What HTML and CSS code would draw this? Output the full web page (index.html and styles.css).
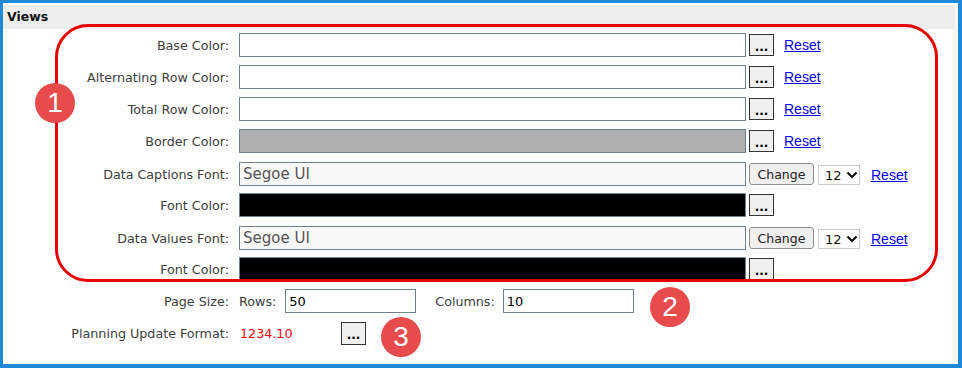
FILE: index.html
```
<html>

<head>
  <link rel="stylesheet" href="styles.css">
</head>

<body>
  <div class="frame">
    <div class="section-head">Views</div>
    <div class="form">
      <div class="row">
        <label class="lbl">Base Color:</label>
        <input class="field" type="text" />
        <button class="dots">...</button>
        <a href="#" class="reset">Reset</a>
      </div>
      <div class="row">
        <label class="lbl">Alternating Row Color:</label>
        <input class="field" type="text" />
        <button class="dots">...</button>
        <a href="#" class="reset">Reset</a>
      </div>
      <div class="row">
        <label class="lbl">Total Row Color:</label>
        <input class="field" type="text" />
        <button class="dots">...</button>
        <a href="#" class="reset">Reset</a>
      </div>
      <div class="row">
        <label class="lbl">Border Color:</label>
        <input class="field field-gray" type="text" />
        <button class="dots">...</button>
        <a href="#" class="reset">Reset</a>
      </div>
      <div class="row row-font">
        <label class="lbl">Data Captions Font:</label>
        <input class="field field-font" type="text" value="Segoe UI" readonly />
        <button class="change">Change</button>
        <div class="size-select">12
          <svg width="12" height="8" viewBox="0 0 12 8"><path d="M1.5 1.5 L6 6 L10.5 1.5" fill="none" stroke="#111" stroke-width="2.2"/></svg>
        </div>
        <a href="#" class="reset reset-wide">Reset</a>
      </div>
      <div class="row">
        <label class="lbl">Font Color:</label>
        <input class="field field-black" type="text" />
        <button class="dots">...</button>
      </div>
      <div class="row row-font">
        <label class="lbl">Data Values Font:</label>
        <input class="field field-font" type="text" value="Segoe UI" readonly />
        <button class="change">Change</button>
        <div class="size-select">12
          <svg width="12" height="8" viewBox="0 0 12 8"><path d="M1.5 1.5 L6 6 L10.5 1.5" fill="none" stroke="#111" stroke-width="2.2"/></svg>
        </div>
        <a href="#" class="reset reset-wide">Reset</a>
      </div>
      <div class="row">
        <label class="lbl">Font Color:</label>
        <input class="field field-black" type="text" />
        <button class="dots">...</button>
      </div>
      <div class="row">
        <label class="lbl">Page Size:</label>
        <span class="sub-lbl">Rows:</span>
        <input class="small-field" type="text" value="50" />
        <span class="sub-lbl cols-lbl">Columns:</span>
        <input class="small-field" type="text" value="10" />
      </div>
      <div class="row">
        <label class="lbl">Planning Update Format:</label>
        <span class="format-value">1234.10</span>
        <button class="dots dots-tall">...</button>
      </div>
    </div>

    <!-- callouts -->
    <div class="callout-box"></div>
    <div class="badge badge-1">1</div>
    <div class="badge badge-2">2</div>
    <div class="badge badge-3">3</div>
  </div>
</body>

</html>
```

FILE: styles.css
```
body {
  margin: 0;
  font-family: "DejaVu Sans", Verdana, sans-serif;
}

.frame {
  position: relative;
  width: 962px;
  height: 368px;
  box-sizing: border-box;
  border-style: solid;
  border-color: #1e88d9;
  border-width: 3px 4px 4px 3px;
  background: #ffffff;
}

.section-head {
  margin: 2px 3px 0 0;
  height: 24px;
  line-height: 24px;
  padding-left: 4px;
  background-color: #eeeeee;
  font-weight: bold;
  font-size: 12.5px;
  color: #111;
}

.form {
  padding-top: 4px;
}

.row {
  display: flex;
  align-items: center;
  height: 24px;
  margin-bottom: 8px;
}

.row-font .lbl,
.row-font .field {
  position: relative;
  top: 1px;
}

.lbl {
  width: 226px;
  margin-right: 10px;
  text-align: right;
  font-size: 12.7px;
  color: #3d3d3d;
  flex-shrink: 0;
}

.field {
  width: 507px;
  height: 24px;
  box-sizing: border-box;
  border: 1px solid #708090;
  padding: 0 3px;
  margin: 0;
  outline: none;
  background: #ffffff;
  font-family: "DejaVu Sans", Verdana, sans-serif;
}

.field-gray {
  background-color: #aeaeae;
}

.field-black {
  background-color: #000000;
}

.field-font {
  background-color: #f8f8f8;
  color: #555555;
  font-size: 15px;
}

.dots {
  width: 25px;
  height: 22px;
  margin: 0 0 0 3px;
  padding: 0;
  border: 1px solid #333;
  border-radius: 0;
  background-color: #efefef;
  font-family: "DejaVu Sans", Verdana, sans-serif;
  font-size: 12px;
  font-weight: bold;
  color: #000;
  line-height: 24px;
}

.dots-tall {
  height: 23px;
}

.reset {
  margin-left: 10px;
  font-family: "Liberation Sans", Arial, sans-serif;
  font-size: 14px;
  color: #0000ee;
}

.reset-wide {
  margin-left: 11px;
  position: relative;
  top: 2px;
}

.change {
  width: 65px;
  height: 22px;
  margin: 2px 0 0 3px;
  padding: 0;
  border: 1px solid #8f8f8f;
  border-radius: 3px;
  background-color: #efefef;
  font-family: "DejaVu Sans", Verdana, sans-serif;
  font-size: 12.5px;
  color: #222;
}

.size-select {
  width: 42px;
  height: 20px;
  box-sizing: border-box;
  margin: 4px 0 0 4px;
  padding-left: 6px;
  border: 1px solid #cccccc;
  background: #ffffff;
  display: flex;
  align-items: center;
  gap: 4px;
  font-size: 13px;
  color: #111;
}

.sub-lbl {
  font-size: 12.7px;
  color: #3d3d3d;
  margin-right: 9px;
}

.cols-lbl {
  margin-left: 19px;
  margin-right: 8px;
}

.small-field {
  width: 131px;
  height: 24px;
  box-sizing: border-box;
  border: 1px solid #708090;
  padding: 0 3px;
  margin: 0;
  font-family: "DejaVu Sans", Verdana, sans-serif;
  font-size: 13px;
  color: #000;
}

.format-value {
  width: 101px;
  margin-left: 1px;
  font-size: 12.7px;
  color: #ff0000;
}

.format-value + .dots {
  margin-left: 0;
}

.callout-box {
  position: absolute;
  left: 52px;
  top: 21px;
  width: 877px;
  height: 252px;
  border: 3px solid #e60000;
  border-radius: 33px;
}

.badge {
  position: absolute;
  width: 40px;
  height: 40px;
  border-radius: 50%;
  background-color: #e84b4b;
  color: #ffffff;
  font-family: "Liberation Sans", Arial, sans-serif;
  font-size: 28px;
  line-height: 40px;
  text-align: center;
}

.badge-1 {
  left: 32px;
  top: 80px;
}

.badge-2 {
  left: 647px;
  top: 284px;
}

.badge-3 {
  left: 378px;
  top: 314px;
}
```
